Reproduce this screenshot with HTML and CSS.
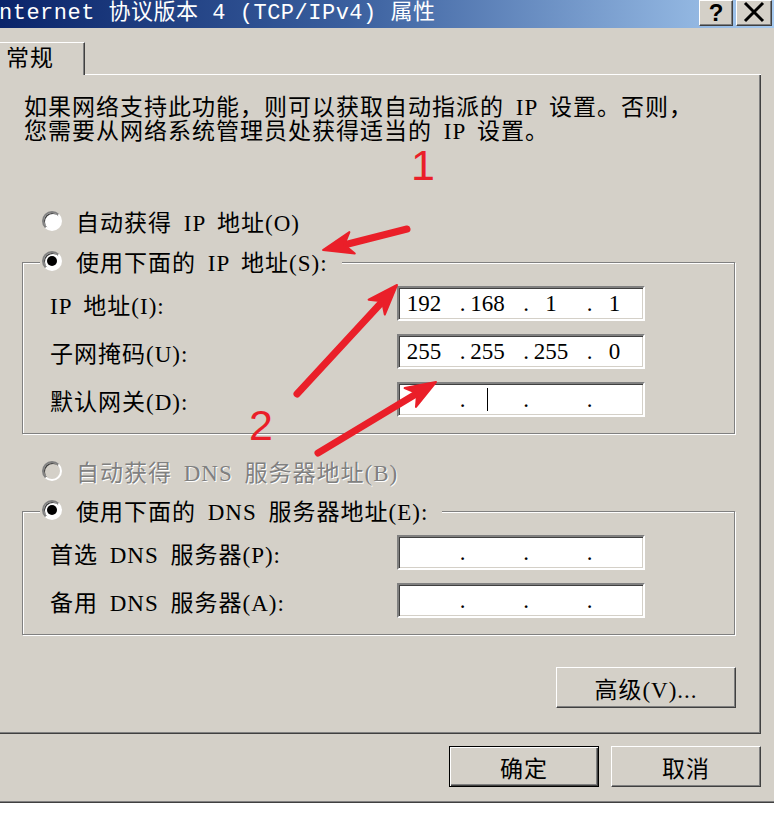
FILE: index.html
```html
<!DOCTYPE html>
<html lang="zh-CN">
<head>
<meta charset="utf-8">
<title>Internet 协议版本 4 (TCP/IPv4) 属性</title>
<link rel="stylesheet" href="styles.css">
</head>
<body>
<div class="window">
  <div class="titlebar">
    <div class="title">nternet 协议版本 4 (TCP/IPv4) 属性</div>
    <div class="tbbtns">
      <div class="tbbtn help">?</div>
      <div class="tbbtn close">
        <svg width="24" height="22" viewBox="0 0 24 22"><path d="M3 2 L21 20 M21 2 L3 20" stroke="#000" stroke-width="3" fill="none"/></svg>
      </div>
    </div>
  </div>
  <div class="tabs">
    <div class="tab">常规</div>
    <div class="tabfill"></div>
  </div>
  <div class="panel">
    <p class="intro">如果网络支持此功能，则可以获取自动指派的 IP 设置。否则，<br>您需要从网络系统管理员处获得适当的 IP 设置。</p>
    <div class="radio-row first"><span class="radio"></span><span>自动获得 IP 地址(O)</span></div>
    <div class="group g1">
      <div class="legend"><span class="radio checked"></span><span>使用下面的 IP 地址(S):</span></div>
      <div class="frow"><span class="lbl">IP 地址(I):</span>
        <div class="ipbox"><div class="ipf">
          <div class="seg"><span class="dot"></span><span class="val">192</span></div>
          <div class="seg"><span class="dot">.</span><span class="val">168</span></div>
          <div class="seg"><span class="dot">.</span><span class="val">1</span></div>
          <div class="seg"><span class="dot">.</span><span class="val">1</span></div>
        </div></div>
      </div>
      <div class="frow"><span class="lbl">子网掩码(U):</span>
        <div class="ipbox"><div class="ipf">
          <div class="seg"><span class="dot"></span><span class="val">255</span></div>
          <div class="seg"><span class="dot">.</span><span class="val">255</span></div>
          <div class="seg"><span class="dot">.</span><span class="val">255</span></div>
          <div class="seg"><span class="dot">.</span><span class="val">0</span></div>
        </div></div>
      </div>
      <div class="frow"><span class="lbl">默认网关(D):</span>
        <div class="ipbox"><div class="ipf">
          <div class="seg"><span class="dot"></span><span class="val"></span></div>
          <div class="seg"><span class="dot">.</span><span class="val"><span class="caret"></span></span></div>
          <div class="seg"><span class="dot">.</span><span class="val"></span></div>
          <div class="seg"><span class="dot">.</span><span class="val"></span></div>
        </div></div>
      </div>
    </div>
    <div class="radio-row disabled"><span class="radio off"></span><span>自动获得 DNS 服务器地址(B)</span></div>
    <div class="group g2">
      <div class="legend"><span class="radio checked"></span><span>使用下面的 DNS 服务器地址(E):</span></div>
      <div class="frow"><span class="lbl">首选 DNS 服务器(P):</span>
        <div class="ipbox"><div class="ipf">
          <div class="seg"><span class="dot"></span><span class="val"></span></div>
          <div class="seg"><span class="dot">.</span><span class="val"></span></div>
          <div class="seg"><span class="dot">.</span><span class="val"></span></div>
          <div class="seg"><span class="dot">.</span><span class="val"></span></div>
        </div></div>
      </div>
      <div class="frow"><span class="lbl">备用 DNS 服务器(A):</span>
        <div class="ipbox"><div class="ipf">
          <div class="seg"><span class="dot"></span><span class="val"></span></div>
          <div class="seg"><span class="dot">.</span><span class="val"></span></div>
          <div class="seg"><span class="dot">.</span><span class="val"></span></div>
          <div class="seg"><span class="dot">.</span><span class="val"></span></div>
        </div></div>
      </div>
    </div>
    <div class="adv-row"><button class="btn adv">高级(V)...</button></div>
  </div>
  <div class="footer">
    <button class="btn dlg default">确定</button>
    <button class="btn dlg">取消</button>
  </div>
</div>
<svg class="annot" width="774" height="822" viewBox="0 0 774 822">
  <g fill="#ea1f29" stroke="#ea1f29" stroke-linecap="round" stroke-linejoin="round">
    <line x1="407" y1="229" x2="346" y2="244.5" stroke-width="7"/>
    <polygon points="323,250 354.8,253.4 344.3,244.7 349.4,232.1" stroke-width="2"/>
    <line x1="297" y1="394" x2="382" y2="302" stroke-width="7"/>
    <polygon points="397,285 384.8,314.5 382.1,301.2 368.6,299.7" stroke-width="2"/>
    <line x1="318" y1="453" x2="416" y2="394" stroke-width="7"/>
    <polygon points="436,382 416,406.9 417.1,393.4 404.6,388.1" stroke-width="2"/>
  </g>
  <text class="num" x="411" y="180">1</text>
  <text class="num" x="249" y="440">2</text>
</svg>
</body>
</html>
```
FILE: styles.css
```css
html, body {
  margin: 0;
  padding: 0;
}
body {
  width: 774px;
  height: 822px;
  overflow: hidden;
  position: relative;
  background: #fff;
  color: #000;
  font-family: "Liberation Serif", "Noto Sans CJK SC", serif;
  font-size: 23px;
  letter-spacing: 1px;
  word-spacing: 5px;
}
.window {
  height: 802px;
  box-sizing: border-box;
  background: #d4d0c8;
  border-bottom: 1px solid #808080;
  box-shadow: 0 1px 0 #404040;
  display: flex;
  flex-direction: column;
}
.titlebar {
  height: 28px;
  flex: none;
  display: flex;
  align-items: flex-start;
  background: linear-gradient(to right, #0a246a 0%, #3a5f9e 45%, #a6caf0 100%);
}
.title {
  flex: 1;
  color: #fff;
  font-family: "Liberation Mono", "Noto Sans CJK SC", monospace;
  font-size: 22px;
  letter-spacing: 0.5px;
  word-spacing: 0;
  line-height: 28px;
  white-space: nowrap;
  margin-left: -1px;
}
.tbbtns {
  display: flex;
  gap: 3px;
  margin: 0 2px 0 0;
}
.tbbtn {
  width: 34px;
  height: 26px;
  box-sizing: border-box;
  background: #d4d0c8;
  border: 1px solid;
  border-color: #fff #404040 #404040 #fff;
  box-shadow: inset -1px -1px 0 #808080;
  display: flex;
  align-items: center;
  justify-content: center;
}
.tbbtn.close {
  width: 36px;
  align-items: flex-start;
}
.tbbtn.help {
  font-family: "Liberation Sans", sans-serif;
  font-weight: bold;
  font-size: 24px;
  line-height: 24px;
  letter-spacing: 0;
}
.tabs {
  width: 761px;
  height: 47px;
  flex: none;
  display: flex;
  align-items: flex-end;
}
.tab {
  width: 85px;
  height: 33px;
  box-sizing: border-box;
  border-top: 1px solid #fff;
  border-right: 1px solid #404040;
  box-shadow: inset -1px 0 0 #808080;
  padding-left: 6px;
  line-height: 32px;
}
.tabfill {
  flex: 1;
  border-bottom: 1px solid #fff;
}
.panel {
  width: 761px;
  height: 659px;
  flex: none;
  box-sizing: border-box;
  border-right: 1px solid #404040;
  border-bottom: 1px solid #404040;
  box-shadow: inset -1px -1px 0 #808080;
  padding-top: 21px;
}
.intro {
  margin: 0 0 0 24px;
  line-height: 24px;
  white-space: nowrap;
}
.radio-row {
  height: 24px;
  display: flex;
  align-items: center;
  gap: 14px;
  padding-left: 42px;
  margin-top: 25px;
}
.radio-row.first {
  margin-top: 65px;
}
.radio-row.disabled {
  color: #808080;
  text-shadow: 1px 1px 0 #fff;
}
.radio {
  width: 20px;
  height: 20px;
  flex: none;
  box-sizing: border-box;
  border-radius: 50%;
  border: 2px solid;
  border-color: #808080 #fff #fff #808080;
  background: #fff;
  box-shadow: inset 1px 1px 0 #404040;
  position: relative;
}
.radio.off {
  background: #d4d0c8;
}
.radio.checked::after {
  content: "";
  position: absolute;
  left: 3px;
  top: 3px;
  width: 10px;
  height: 10px;
  border-radius: 50%;
  background: #000;
}
.group {
  position: relative;
  margin-left: 22px;
  width: 713px;
  box-sizing: border-box;
  border: 1px solid #808080;
  box-shadow: inset 1px 1px 0 #fff, 1px 1px 0 #fff;
  padding: 23px 0 16px 27px;
  display: flex;
  flex-direction: column;
  gap: 13px;
}
.g1 {
  margin-top: 29px;
}
.g2 {
  margin-top: 28px;
}
.legend {
  position: absolute;
  top: -14px;
  left: 17px;
  height: 24px;
  padding: 0 14px 0 2px;
  background: #d4d0c8;
  display: flex;
  align-items: center;
  gap: 14px;
}
.frow {
  height: 35px;
  display: flex;
  align-items: center;
}
.lbl {
  width: 347px;
  flex: none;
  white-space: nowrap;
}
.ipbox {
  width: 248px;
  height: 35px;
  flex: none;
  box-sizing: border-box;
  background: #fff;
  border: 2px solid;
  border-color: #808080 #fff #fff #808080;
  box-shadow: inset 1px 1px 0 #404040, inset -1px -1px 0 #d4d0c8;
  display: flex;
  align-items: center;
  overflow: hidden;
}
.ipf {
  display: flex;
  margin-left: -3px;
  letter-spacing: 0;
  word-spacing: 0;
  line-height: 31px;
}
.seg {
  width: 63.5px;
  flex: none;
  display: flex;
}
.dot {
  width: 6px;
  text-align: center;
}
.val {
  width: 44px;
  text-align: center;
  display: flex;
  justify-content: center;
  align-items: center;
}
.caret {
  display: block;
  width: 1px;
  height: 23px;
  background: #000;
}
.adv-row {
  display: flex;
  justify-content: flex-end;
  margin: 32px 24px 0 0;
}
.btn {
  box-sizing: border-box;
  background: #d4d0c8;
  border: 1px solid;
  border-color: #fff #404040 #404040 #fff;
  box-shadow: inset -1px -1px 0 #808080;
  font: inherit;
  letter-spacing: inherit;
  word-spacing: inherit;
  color: #000;
  padding: 0;
  margin: 0;
}
.btn.adv {
  width: 180px;
  height: 41px;
}
.footer {
  display: flex;
  justify-content: flex-end;
  gap: 12px;
  padding: 12px 13px 0 0;
}
.btn.dlg {
  width: 150px;
  height: 41px;
}
.btn.default {
  border-color: #000;
  box-shadow: inset 1px 1px 0 #fff, inset -1px -1px 0 #404040, inset -2px -2px 0 #808080;
}
.annot {
  position: absolute;
  left: 0;
  top: 0;
  pointer-events: none;
}
.num {
  font-family: "Liberation Sans", sans-serif;
  font-size: 43px;
  fill: #ea1f29;
  letter-spacing: 0;
}
```
